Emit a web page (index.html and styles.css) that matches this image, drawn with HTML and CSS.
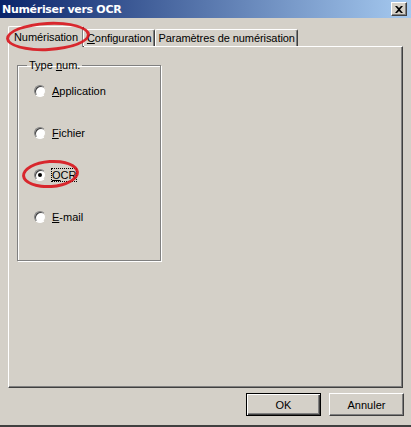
FILE: index.html
```html
<!DOCTYPE html>
<html>
<head>
    <title>Numériser vers OCR</title>
    <link rel="stylesheet" href="styles.css">
</head>
<body>
    <div class="window">
        <div class="titlebar">
            <span class="title">Numériser vers OCR</span>
            <span class="close-btn">
                <svg width="8" height="7" viewBox="0 0 8 7"><path d="M0 0h2l2 2 2-2h2L5 3.5 8 7H6L4 5 2 7H0l3-3.5z" fill="#000"/></svg>
            </span>
        </div>

        <div class="tabs">
            <div class="tab active">Numérisation</div>
            <div class="tab"><u>C</u>onfiguration</div>
            <div class="tab">Paramètres de numérisation</div>
        </div>

        <div class="panel">
            <fieldset class="group">
                <legend>Type <u>n</u>um.</legend>
                <label class="radio-row">
                    <span class="radio"></span>
                    <span><u>A</u>pplication</span>
                </label>
                <label class="radio-row">
                    <span class="radio"></span>
                    <span><u>F</u>ichier</span>
                </label>
                <label class="radio-row">
                    <span class="radio checked"></span>
                    <span class="focus"><u>O</u>CR</span>
                </label>
                <label class="radio-row">
                    <span class="radio"></span>
                    <span><u>E</u>-mail</span>
                </label>
            </fieldset>
        </div>

        <div class="buttons">
            <button class="btn default">OK</button>
            <button class="btn">Annuler</button>
        </div>

        <!-- hand-drawn highlight marks -->
        <div class="mark mark-tab"></div>
        <div class="mark mark-ocr"></div>
    </div>
</body>
</html>
```

FILE: styles.css
```css
* {
    box-sizing: border-box;
    margin: 0;
    padding: 0;
}

body {
    font-family: 'Liberation Sans', Arial, sans-serif;
    font-size: 11px;
    background: #d4d0c8;
}

.window {
    position: relative;
    width: 411px;
    height: 427px;
    background: #d4d0c8;
    border-bottom: 2px solid #404040;
    overflow: hidden;
}

.titlebar {
    height: 18px;
    display: flex;
    align-items: center;
    justify-content: space-between;
    padding: 0 4px 0 2px;
    background: linear-gradient(to right, #0a246a, #a6caf0);
}

.title {
    color: white;
    font-family: 'DejaVu Sans', sans-serif;
    font-weight: bold;
    font-size: 11px;
    letter-spacing: -0.3px;
}

.close-btn {
    width: 16px;
    height: 14px;
    display: flex;
    align-items: center;
    justify-content: center;
    background: #d4d0c8;
    border: 1px solid;
    border-color: #fff #404040 #404040 #fff;
    box-shadow: inset -1px -1px 0 #808080;
}

.tabs {
    display: flex;
    align-items: flex-end;
    margin: 8px 0 0 8px;
    height: 20px;
    position: relative;
    z-index: 1;
}

.tab {
    height: 17px;
    padding: 2px 2px 0 3px;
    border: 1px solid;
    border-color: #fff #404040 transparent #fff;
    border-bottom: none;
    border-radius: 2px 2px 0 0;
    box-shadow: inset -1px 0 0 #808080;
    white-space: nowrap;
    letter-spacing: -0.07px;
    background: #d4d0c8;
}

.tab.active {
    height: 21px;
    margin-right: -1px;
    margin-bottom: -1px;
    padding: 4px 5px 0 5px;
}

.panel {
    margin-left: 8px;
    width: 395px;
    height: 342px;
    border: 1px solid;
    border-color: #fff #404040 #404040 #fff;
    box-shadow: inset -1px -1px 0 #808080;
    padding: 12px 0 0 8px;
}

.group {
    width: 144px;
    height: 202px;
    border: 1px solid #808080;
    box-shadow: inset 1px 1px 0 #fff, 1px 1px 0 #fff;
    padding: 13px 0 0 16px;
    display: flex;
    flex-direction: column;
    gap: 28px;
}

legend {
    margin-left: -7px;
    padding: 0 2px;
}

.radio-row {
    display: flex;
    align-items: center;
    gap: 6px;
    height: 14px;
}

.radio {
    width: 12px;
    height: 12px;
    border-radius: 50%;
    background: #fff;
    border: 1px solid;
    border-color: #808080 #d4d0c8 #fff #808080;
    box-shadow: inset 1px 1px 0 #404040;
    display: flex;
    align-items: center;
    justify-content: center;
}

.radio.checked::after {
    content: "";
    width: 4px;
    height: 4px;
    border-radius: 50%;
    background: #000;
}

.focus {
    outline: 1px dotted #000;
    outline-offset: 0;
}

.buttons {
    display: flex;
    justify-content: flex-end;
    gap: 8px;
    padding: 5px 7px 0 0;
}

.btn {
    width: 75px;
    height: 23px;
    font-family: 'Liberation Sans', Arial, sans-serif;
    font-size: 11px;
    background: #d4d0c8;
    border: 1px solid;
    border-color: #fff #404040 #404040 #fff;
    box-shadow: inset -1px -1px 0 #808080;
}

.btn.default {
    border: 1px solid #000;
    box-shadow: inset 1px 1px 0 #fff, inset -1px -1px 0 #404040, inset -2px -2px 0 #808080;
}

.mark {
    position: absolute;
    z-index: 2;
    border: 3px solid #d8141c;
    border-radius: 50%;
    opacity: 0.9;
}

.mark-tab {
    left: 6px;
    top: 22px;
    width: 84px;
    height: 29px;
    transform: rotate(-3deg);
}

.mark-ocr {
    left: 22px;
    top: 160px;
    width: 57px;
    height: 28px;
    transform: rotate(-4deg);
}
```
